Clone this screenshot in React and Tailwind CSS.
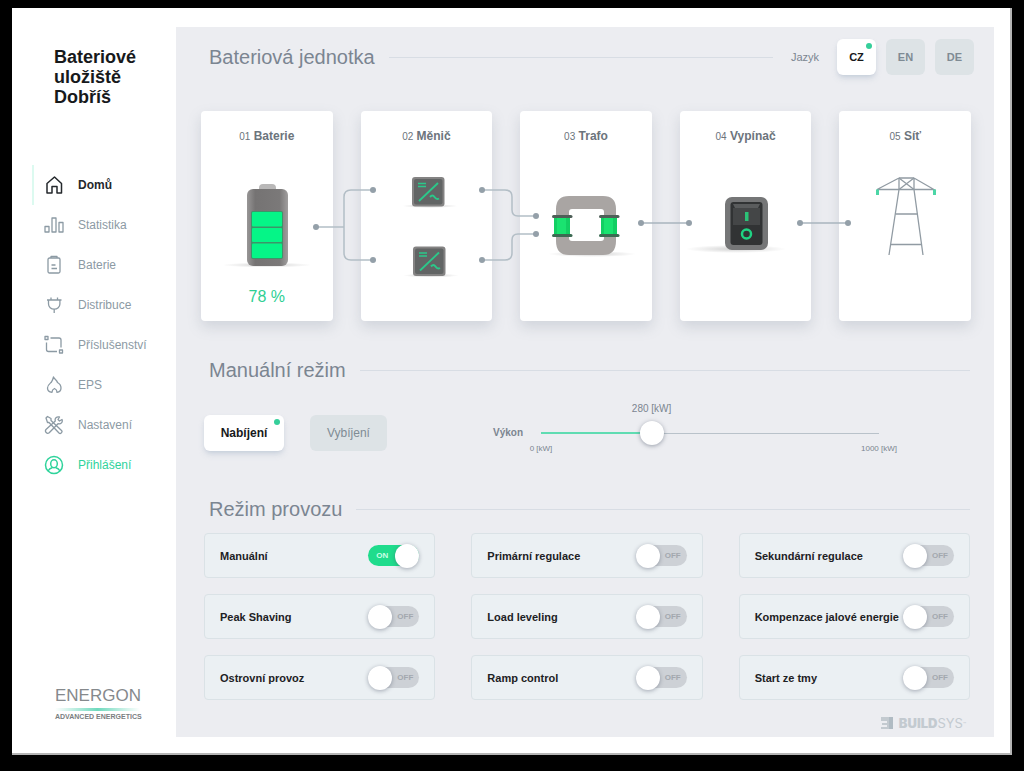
import { useState } from "react"

const NAV_ITEMS = [
  { label: "Domů", icon: "home" },
  { label: "Statistika", icon: "stats" },
  { label: "Baterie", icon: "battery" },
  { label: "Distribuce", icon: "plug" },
  { label: "Příslušenství", icon: "accessories" },
  { label: "EPS", icon: "flame" },
  { label: "Nastavení", icon: "tools" },
  { label: "Přihlášení", icon: "user" },
]

const LANGUAGES = ["CZ", "EN", "DE"]

const MODES = [
  "Manuální",
  "Primární regulace",
  "Sekundární regulace",
  "Peak Shaving",
  "Load leveling",
  "Kompenzace jalové energie",
  "Ostrovní provoz",
  "Ramp control",
  "Start ze tmy",
]

const ICON_PATHS = {
  home: (
    <path d="M3 8.500 10.500 2l7 6.500V18H13v-6.500H8V18H3Z" />
  ),
  stats: (
    <>
      <rect x="1" y="11.500" width="4" height="5.500" />
      <rect x="8" y="3" width="4" height="14" />
      <rect x="15" y="7.500" width="4" height="9.500" />
    </>
  ),
  battery: (
    <>
      <rect x="4" y="3" width="12" height="15" rx="1.500" />
      <path d="M7 3V1.500h6V3M7.500 10h4M7.500 13.500h5.500" />
    </>
  ),
  plug: (
    <>
      <path d="M3 5h14.500M4.500 5v4a5.700 5.200 0 0 0 11.400 0V5M10.200 14.200V18" />
      <path d="M7 2.500V5M13.500 2.500V5" />
    </>
  ),
  accessories: (
    <>
      <rect x="1" y="1.500" width="3" height="3" />
      <rect x="15.500" y="15" width="3" height="3" />
      <path d="M6.500 3H15a2 2 0 0 1 2 2v7.500M2.500 7.500v7a2 2 0 0 0 2 2H13" />
    </>
  ),
  flame: (
    <path d="M9.500 2c.8 2.200 3.500 3.200 4 5.500 1.500.8 3.500 2.800 3.500 5.500 0 2.500-1.500 4-4 4.300 0-1.800-.8-3-2.500-3.800-1.700.8-2.500 2-2.500 3.800-2.500-.3-4.500-1.800-4.500-4.300 0-3 2.500-4.500 4-6C8.500 5.500 9 4 9.500 2Z" />
  ),
  tools: (
    <>
      <path d="m2 3 1.500-1.500L7 3.500v2l10.500 10c1.500 1.500-1 4-2.500 2.500L5 7.500H3.500Z" />
      <path d="M18 4.500 15.500 6 14 4.500 15.500 2c-3-.8-5 1.500-4.200 4L2 14.500c-1.600 2 1 5 3.200 3.200l8.800-9c3 .8 5-1.500 4-4.200Z" />
    </>
  ),
  user: (
    <>
      <circle cx="10" cy="10" r="8.500" />
      <ellipse cx="10" cy="8.800" rx="3.300" ry="4" />
      <path d="M4 16c1-2 2-2.800 4.500-3.500M16 16c-1-2-2-2.800-4.500-3.500" />
    </>
  ),
}

function NavIcon({ name }) {
  return (
    <svg
      viewBox="0 0 20 20"
      className="h-5 w-5 shrink-0"
      fill="none"
      stroke="currentColor"
      strokeWidth={name === "home" || name === "user" ? 1.5 : 1.3}
      strokeLinejoin="round"
      aria-hidden="true"
    >
      {ICON_PATHS[name]}
    </svg>
  )
}

function Sidebar({ active, onSelect }) {
  function colorOf(label) {
    if (label === active) return "font-bold text-[#24282c]"
    if (label === "Přihlášení") return "text-[#2fd39b]"
    return "text-[#8c9aa4]"
  }

  return (
    <aside className="flex w-41 shrink-0 flex-col pt-[39px] pb-8">
      <h1 className="pl-[42px] text-[18px] leading-5 font-bold text-[#17191b]">
        Bateriové
        <br />
        uložiště
        <br />
        Dobříš
      </h1>

      <nav className="mt-[58px] flex flex-col pl-5">
        {NAV_ITEMS.map((item) => (
          <a
            key={item.label}
            href="#"
            onClick={() => onSelect(item.label)}
            className={`flex h-10 items-center gap-3.5 border-l-2 pl-2.5 text-[12px] leading-4 ${
              item.label === active ? "border-[#dcfaf0]" : "border-transparent"
            } ${colorOf(item.label)}`}
          >
            <NavIcon name={item.icon} />
            {item.label}
          </a>
        ))}
      </nav>

      <div className="mt-auto pl-[43px]">
        <p className="text-[17px] leading-5 text-[#85898c]">ENERGON</p>
        <div className="mt-0.5 h-[3px] w-[85px] bg-linear-to-r from-transparent via-[#6fd9bd] to-transparent" />
        <p className="mt-0.5 text-[7px] leading-2 font-bold whitespace-nowrap text-[#7a7e81]">
          ADVANCED ENERGETICS
        </p>
      </div>
    </aside>
  )
}

function SectionTitle({ children }) {
  return (
    <div className="flex flex-1 items-center gap-3.5">
      <h2 className="text-[20px] leading-7 whitespace-nowrap text-[#7b8591]">{children}</h2>
      <div className="h-px flex-1 bg-[#d8dde4]" />
    </div>
  )
}

function ChoiceButton({ selected, onClick, className, children }) {
  return (
    <button
      type="button"
      aria-pressed={selected}
      onClick={onClick}
      className={`relative h-9 rounded-md leading-4 ${
        selected
          ? "bg-white font-bold text-[#17191b] shadow-md shadow-slate-400/30"
          : "bg-[#dde3e6] text-[#7f8b94]"
      } ${className}`}
    >
      {children}
      {selected && (
        <span className="absolute top-1 right-1 h-1.5 w-1.5 rounded-full bg-[#35cf9a]" />
      )}
    </button>
  )
}

function Art({ children }) {
  return (
    <svg viewBox="0 0 132 120" className="mx-auto mt-4 h-[120px] w-[132px]" fill="none" aria-hidden="true">
      <defs>
        <linearGradient id="body" x1="0" y1="0" x2="1" y2="0">
          <stop offset="0" stopColor="#989696" />
          <stop offset="0.200" stopColor="#757373" />
          <stop offset="0.800" stopColor="#7b7979" />
          <stop offset="1" stopColor="#a09e9e" />
        </linearGradient>
        <radialGradient id="floor">
          <stop offset="0" stopColor="#000" stopOpacity="0.180" />
          <stop offset="1" stopColor="#000" stopOpacity="0" />
        </radialGradient>
      </defs>
      {children}
    </svg>
  )
}

function BatteryArt() {
  return (
    <Art>
      <ellipse cx="66" cy="104" rx="45" ry="2.500" fill="url(#floor)" />
      <rect x="58" y="23" width="17" height="12" rx="4" fill="#b9b8b8" />
      <rect x="46" y="28" width="41" height="77" rx="6" fill="url(#body)" />
      <rect x="50" y="50" width="32" height="48" rx="2" fill="#3d9469" />
      <rect x="51" y="51" width="30" height="14.500" rx="1" fill="#05f587" />
      <rect x="51" y="67" width="30" height="14" rx="1" fill="#05f587" />
      <rect x="51" y="82.500" width="30" height="14.500" rx="1" fill="#05f587" />
    </Art>
  )
}

function InverterBox({ x, y }) {
  return (
    <g transform={`translate(${x} ${y})`}>
      <ellipse cx="18" cy="29" rx="28" ry="2" fill="url(#floor)" />
      <rect width="32.500" height="29.500" rx="3" fill="#848383" />
      <rect x="2" y="2" width="28.500" height="25.500" rx="2" fill="#626565" />
      <path d="M7 24 26 6" stroke="#2bc98a" strokeWidth="1.800" />
      <path d="M6 6.500h8M6 9.500h8" stroke="#2bc98a" strokeWidth="1.700" />
      <path d="M18 20q2.500-3 4.500 0t4.500 1.500" stroke="#2bc98a" strokeWidth="2" />
    </g>
  )
}

function InverterArt() {
  return (
    <Art>
      <InverterBox x={51} y={16} />
      <InverterBox x={52} y={85.5} />
    </Art>
  )
}

function Coil({ x }) {
  return (
    <g transform={`translate(${x} 54)`}>
      <rect x="2" y="1" width="16" height="21" fill="#12cf63" />
      <rect x="5" y="2" width="9" height="19" fill="#1ae370" />
      <rect y="0" width="20.500" height="3" rx="1.500" fill="#4e5f57" />
      <rect y="19" width="20.500" height="3" rx="1.500" fill="#3c6b53" />
    </g>
  )
}

function TransformerArt() {
  return (
    <Art>
      <ellipse cx="72" cy="93" rx="44" ry="3" fill="url(#floor)" />
      <path
        fillRule="evenodd"
        fill="#a9a5a3"
        d="M49 35h34q13 0 13 13v32q0 14-13 14H49q-13 0-13-14V48q0-13 13-13Zm3 13q-3 0-3 3v26q0 3 3 3h29q3 0 3-3V51q0-3-3-3Z"
      />
      <Coil x={32} />
      <Coil x={79} />
    </Art>
  )
}

function SwitchArt() {
  return (
    <Art>
      <ellipse cx="56" cy="88" rx="50" ry="4" fill="url(#floor)" />
      <rect x="45" y="36" width="43" height="53" rx="7" fill="#757677" />
      <rect x="50.500" y="41" width="32" height="43" rx="3" fill="#313334" />
      <path d="M53 43h27l-2 4H55Z" fill="#5a5c5d" />
      <rect x="53" y="47" width="27" height="17" fill="#444647" />
      <rect x="65" y="51" width="3.500" height="9" fill="#2bc277" />
      <circle cx="66.500" cy="73" r="4.500" stroke="#1fd383" strokeWidth="2.500" />
    </Art>
  )
}

function PylonArt() {
  return (
    <Art>
      <g stroke="#919ba3" strokeWidth="1.300">
        <path d="M60 17h15M60 17 38 28.500h57L75 17M60 17v11.500L50 94M75 17v11.500L84 94" />
        <path d="m60 17 15 11.500M75 17 60 28.500M56.500 53h22M52 83.500h30" />
      </g>
      <g stroke="#4cd6a6" strokeWidth="3">
        <path d="M38.500 28.500v5.500M95.500 28.500v5.500" />
      </g>
    </Art>
  )
}

function SplitConnector() {
  return (
    <svg
      viewBox="0 0 64 78"
      className="absolute top-[75px] -right-11 z-10 h-[78px] w-[64px]"
      fill="none"
      stroke="#b3bec6"
      aria-hidden="true"
    >
      <path strokeWidth="1.500" d="M3 41h28M60 4H38q-7 0-7 7v56q0 7 7 7h22" />
      <g fill="#94a0a9" stroke="none">
        <circle cx="3" cy="41" r="3" />
        <circle cx="60" cy="4" r="3" />
        <circle cx="60" cy="74" r="3" />
      </g>
    </svg>
  )
}

function MergeConnector() {
  return (
    <svg
      viewBox="0 0 62 78"
      className="absolute top-[75px] -right-12 z-10 h-[78px] w-[62px]"
      fill="none"
      stroke="#b3bec6"
      aria-hidden="true"
    >
      <path
        strokeWidth="1.500"
        d="M4 4h23q7 0 7 7v13q0 6 6 6h18M4 74h23q7 0 7-7V54q0-6 6-6h18"
      />
      <g fill="#94a0a9" stroke="none">
        <circle cx="4" cy="4" r="3" />
        <circle cx="4" cy="74" r="3" />
        <circle cx="58" cy="30" r="3" />
        <circle cx="58" cy="48" r="3" />
      </g>
    </svg>
  )
}

function LineConnector() {
  return (
    <svg
      viewBox="0 0 54 8"
      className="absolute top-[108px] -right-10 z-10 h-2 w-[54px]"
      aria-hidden="true"
    >
      <path d="M3 4h48" stroke="#a9b5be" strokeWidth="1.500" />
      <circle cx="3" cy="4" r="3" fill="#94a0a9" />
      <circle cx="51" cy="4" r="3" fill="#94a0a9" />
    </svg>
  )
}

function UnitCard({ number, title, connector, children }) {
  return (
    <article className="relative min-h-[210px] rounded-sm bg-white pt-[17px] text-center shadow-[0_6px_14px_rgba(110,125,140,0.22)]">
      <h3 className="text-[12px] leading-4 font-bold text-[#6c747c]">
        <span className="text-[10px] font-normal">{number}</span> {title}
      </h3>
      {children}
      {connector}
    </article>
  )
}

function PowerSlider() {
  const [position, setPosition] = useState(314)
  // finer steps at the low end of the range
  const power = Math.round(1000 * (position / 1000) ** 1.1)
  const share = position / 1000
  const center = `calc(12px + (100% - 24px) * ${share})`

  return (
    <div className="flex flex-1 items-center">
      <label htmlFor="power" className="w-12 text-[10px] leading-4 font-bold text-[#7b8590]">
        Výkon
      </label>
      <div className="relative h-6 flex-1">
        <div className="absolute top-3 h-px w-full bg-[#b9c2ca]" />
        <div className="absolute top-[11px] h-0.5 bg-[#5fdcb2]" style={{ width: center }} />
        <input
          id="power"
          type="range"
          min="0"
          max="1000"
          value={position}
          aria-valuetext={`${power} kW`}
          onChange={(e) => setPosition(Number(e.target.value))}
          className="relative block h-6 w-full cursor-pointer appearance-none bg-transparent [&::-webkit-slider-thumb]:h-6 [&::-webkit-slider-thumb]:w-6 [&::-webkit-slider-thumb]:appearance-none [&::-webkit-slider-thumb]:rounded-full [&::-webkit-slider-thumb]:bg-white [&::-webkit-slider-thumb]:shadow-[0_1px_4px_rgba(70,80,100,0.5)]"
        />
        <output
          htmlFor="power"
          className="absolute bottom-full -translate-x-1/2 pb-1.5 text-[10px] leading-3 whitespace-nowrap text-[#7b8590]"
          style={{ left: center }}
        >
          {power} [kW]
        </output>
        <span className="absolute top-full left-0 -translate-x-1/2 text-[8px] leading-2 whitespace-nowrap text-[#7b8590]">
          0 [kW]
        </span>
        <span className="absolute top-full left-full -translate-x-1/2 text-[8px] leading-2 whitespace-nowrap text-[#7b8590]">
          1000 [kW]
        </span>
      </div>
    </div>
  )
}

function ModeToggle({ label, on, onChange }) {
  return (
    <label className="flex h-[45px] cursor-pointer items-center justify-between rounded-sm border border-[#dae2e6] bg-[#ebf0f3] px-[15px] text-[11px] leading-4 font-bold text-[#1d2124]">
      <span className="whitespace-nowrap">{label}</span>
      <span className="relative flex h-6 w-[51px] shrink-0 items-center">
        <input
          type="checkbox"
          role="switch"
          checked={on}
          onChange={onChange}
          className={`h-[21px] w-full cursor-pointer appearance-none rounded-full ${on ? "bg-[#1fdc8c]" : "bg-[#cdd1d6]"}`}
        />
        <span
          className={`pointer-events-none absolute text-[8px] ${on ? "left-2 text-[#c9ffe6]" : "right-1.5 text-[#a3a8ae]"}`}
        >
          {on ? "ON" : "OFF"}
        </span>
        <span
          className={`pointer-events-none absolute top-0 h-6 w-6 rounded-full bg-white shadow-[0_1px_4px_rgba(70,80,100,0.45)] ${on ? "right-0" : "left-0"}`}
        />
      </span>
    </label>
  )
}

function BuildsysLogo() {
  return (
    <div className="flex items-center gap-1.5 text-[#c3cad0]">
      <svg viewBox="0 0 12 12" className="h-3 w-3" aria-hidden="true">
        <path fill="currentColor" d="M0 0h12v12H0v-2h6V8H1V6h5V4H0Z" />
        <path fill="#b0bbc3" d="M8 0h4v12H8Z" />
      </svg>
      <p className="font-[Inter,sans-serif] text-[13px] leading-4">
        <span className="font-black">BUILD</span>SYS
        <sup className="text-[5px]">™</sup>
      </p>
    </div>
  )
}

export default function App() {
  const [page, setPage] = useState("Domů")
  const [language, setLanguage] = useState("CZ")
  const [direction, setDirection] = useState("Nabíjení")
  const [activeModes, setActiveModes] = useState(["Manuální"])

  function toggleMode(mode) {
    if (activeModes.includes(mode)) {
      setActiveModes(activeModes.filter((m) => m !== mode))
    } else {
      setActiveModes([...activeModes, mode])
    }
  }

  return (
    <div className="flex min-h-screen flex-col bg-black px-3 pt-2 pb-4 font-['Liberation_Sans',Arial,sans-serif]">
      <div className="flex flex-1 border-r-2 border-b-2 border-[#b5b5b5] bg-white">
        <Sidebar active={page} onSelect={setPage} />

        <main className="mt-[19px] mr-4 mb-4 flex min-w-0 flex-1 flex-col bg-[#ecedf1] pt-3 pb-1.5">
          <header className="flex items-center pr-5 pl-[33px]">
            <SectionTitle>Bateriová jednotka</SectionTitle>
            <span className="mx-[18px] text-[11px] leading-4 text-[#7b8590]">Jazyk</span>
            <div className="flex gap-2.5">
              {LANGUAGES.map((code) => (
                <ChoiceButton
                  key={code}
                  selected={code === language}
                  onClick={() => setLanguage(code)}
                  className="w-[39px] text-[11px] font-bold"
                >
                  {code}
                </ChoiceButton>
              ))}
            </div>
          </header>

          <section className="mt-9 grid grid-cols-5 gap-7 pr-[23px] pl-[25px]">
            <UnitCard number="01" title="Baterie" connector={<SplitConnector />}>
              <BatteryArt />
              <p className="mt-1 text-[16px] leading-6 text-[#2ecf93]">78 %</p>
            </UnitCard>
            <UnitCard number="02" title="Měnič" connector={<MergeConnector />}>
              <InverterArt />
            </UnitCard>
            <UnitCard number="03" title="Trafo" connector={<LineConnector />}>
              <TransformerArt />
            </UnitCard>
            <UnitCard number="04" title="Vypínač" connector={<LineConnector />}>
              <SwitchArt />
            </UnitCard>
            <UnitCard number="05" title="Síť">
              <PylonArt />
            </UnitCard>
          </section>

          <section className="mt-[35px] pr-6 pl-7">
            <div className="flex pl-[5px]">
              <SectionTitle>Manuální režim</SectionTitle>
            </div>
            <div className="mt-[31px] flex items-center pr-[91px]">
              <ChoiceButton
                selected={direction === "Nabíjení"}
                onClick={() => setDirection("Nabíjení")}
                className="w-20 text-[12px]"
              >
                Nabíjení
              </ChoiceButton>
              <ChoiceButton
                selected={direction === "Vybíjení"}
                onClick={() => setDirection("Vybíjení")}
                className="mr-[106px] ml-[26px] w-[77px] text-[12px]"
              >
                Vybíjení
              </ChoiceButton>
              <PowerSlider />
            </div>
          </section>

          <section className="mt-11 pr-6 pl-7">
            <div className="flex pl-[5px]">
              <SectionTitle>Režim provozu</SectionTitle>
            </div>
            <div className="mt-2.5 grid grid-cols-3 gap-x-9 gap-y-4">
              {MODES.map((mode) => (
                <ModeToggle
                  key={mode}
                  label={mode}
                  on={activeModes.includes(mode)}
                  onChange={() => toggleMode(mode)}
                />
              ))}
            </div>
          </section>

          <footer className="mt-auto flex justify-end pr-7">
            <BuildsysLogo />
          </footer>
        </main>
      </div>
    </div>
  )
}
